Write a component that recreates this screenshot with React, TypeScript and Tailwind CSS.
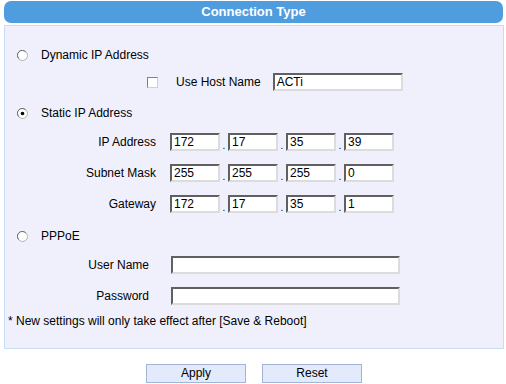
import React from "react";

const Radio = ({ checked }: { checked?: boolean }) => (
  <svg width="11" height="11" viewBox="0 0 11 11" className="shrink-0">
    <circle cx="5.5" cy="5.5" r="5" fill="#ffffff" stroke="#b0b0b0" />
    <path d="M1.8 8.6 A4.6 4.6 0 0 1 8.6 1.8" fill="none" stroke="#707070" strokeWidth="1" />
    {checked && <circle cx="5.5" cy="5.5" r="1.8" fill="#000000" />}
  </svg>
);

const Box = ({ value, w }: { value?: string; w: string }) => (
  <div
    className={`${w} h-[18px] bg-white border-2 border-t-[#606060] border-l-[#606060] border-r-[#dcdcdc] border-b-[#dcdcdc] pl-[2px] text-[12px] leading-[14px] text-black flex items-center`}
  >
    {value}
  </div>
);

const IpRow = ({ label, parts }: { label: string; parts: string[] }) => (
  <div className="flex items-center h-[20px]">
    <div className="w-[152px] text-right pr-[1px]">{label}</div>
    <div className="flex items-center ml-[13px]">
      {parts.map((p, i) => (
        <div key={i} className="flex items-end">
          <Box value={p} w="w-[50px]" />
          {i < 3 && <span className="w-[8px] text-center text-[10px] leading-[10px]">.</span>}
        </div>
      ))}
    </div>
  </div>
);

export default function App() {
  return (
    <div className="w-[506px] h-[384px] bg-white text-[12px] text-black font-['Liberation_Sans',Arial,sans-serif]">
      <div className="pt-[1px] px-[4px]">
        <div className="h-[22px] w-[499px] rounded-[7px] bg-[#4f9ddf] text-white font-bold text-[13px] flex items-center justify-center">
          Connection Type
        </div>
      </div>
      <div className="mx-[4px] mt-[2px] w-[500px] h-[324px] bg-[#f0f0fc] border border-[#c8dcf8] pt-[19px]">
        <div className="flex items-center h-[20px] pl-[12px]">
          <Radio />
          <span className="ml-[13px]">Dynamic IP Address</span>
        </div>
        <div className="flex items-center h-[20px] mt-[7px] pl-[142px]">
          <div className="w-[11px] h-[11px] bg-white border border-t-[#808080] border-l-[#808080] border-r-[#d0d0d0] border-b-[#d0d0d0]" />
          <span className="ml-[18px]">Use Host Name</span>
          <div className="ml-[12px]">
            <Box value="ACTi" w="w-[130px]" />
          </div>
        </div>
        <div className="flex items-center h-[20px] mt-[11px] pl-[12px]">
          <Radio checked />
          <span className="ml-[13px]">Static IP Address</span>
        </div>
        <div className="mt-[9px]">
          <IpRow label="IP Address" parts={["172", "17", "35", "39"]} />
        </div>
        <div className="mt-[11px]">
          <IpRow label="Subnet Mask" parts={["255", "255", "255", "0"]} />
        </div>
        <div className="mt-[11px]">
          <IpRow label="Gateway" parts={["172", "17", "35", "1"]} />
        </div>
        <div className="flex items-center h-[20px] mt-[12px] pl-[12px]">
          <Radio />
          <span className="ml-[13px]">PPPoE</span>
        </div>
        <div className="flex items-center h-[20px] mt-[9px]">
          <div className="w-[144px] text-right">User Name</div>
          <div className="ml-[22px]">
            <Box w="w-[229px]" />
          </div>
        </div>
        <div className="flex items-center h-[20px] mt-[11px]">
          <div className="w-[144px] text-right">Password</div>
          <div className="ml-[22px]">
            <Box w="w-[229px]" />
          </div>
        </div>
        <div className="flex items-center h-[20px] mt-[5px] pl-[3px]">
          * New settings will only take effect after [Save &amp; Reboot]
        </div>
      </div>
      <div className="flex justify-center gap-[16px] mt-[15px] pl-[2px]">
        <button className="w-[100px] h-[19px] bg-[#e2eafc] border border-[#a4b4d4] text-[12px] leading-[17px]">
          Apply
        </button>
        <button className="w-[100px] h-[19px] bg-[#e2eafc] border border-[#a4b4d4] text-[12px] leading-[17px]">
          Reset
        </button>
      </div>
    </div>
  );
}
